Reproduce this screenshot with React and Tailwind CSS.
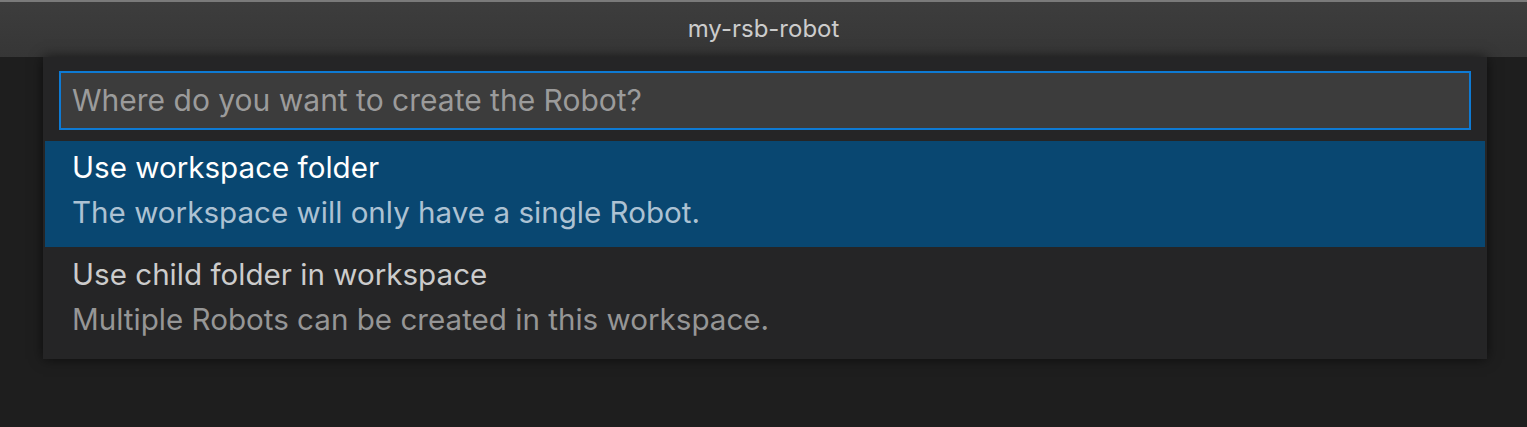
export default function App() {
  const font = { fontFamily: 'Inter, "Noto Sans", sans-serif' };
  return (
    <div className="w-[1527px] h-[427px] bg-[#1e1e1e] flex flex-col overflow-hidden" style={font}>
      {/* window title bar */}
      <div className="h-[57px] shrink-0 border-t-2 border-[#7a7a7a] bg-gradient-to-b from-[#3d3d3d] to-[#363636] flex items-center justify-center pb-[2px]">
        <span className="text-[24px] text-[#cccccc]">my-rsb-robot</span>
      </div>
      {/* quick pick */}
      <div className="ml-[43px] w-[1444px] h-[302px] bg-[#252526] shadow-[0_0_12px_rgba(0,0,0,0.6)] flex flex-col pt-[14px] px-[2px]">
        <div className="mx-[14px] h-[59px] border-2 border-[#0e7ad3] bg-[#3c3c3c] flex items-center px-[11px]">
          <span className="text-[30px] text-[#9b9b9b]">Where do you want to create the Robot?</span>
        </div>
        <div className="mt-[11px] h-[106px] bg-[#094771] flex flex-col pt-[4px] pl-[27px]">
          <div className="text-[29.6px] leading-[45px] text-white">Use workspace folder</div>
          <div className="text-[29.6px] leading-[45px] text-[#adc2d3]">The workspace will only have a single Robot.</div>
        </div>
        <div className="h-[106px] flex flex-col pt-[5px] pl-[27px]">
          <div className="text-[29.6px] leading-[45px] text-[#cccccc]">Use child folder in workspace</div>
          <div className="text-[29.6px] leading-[45px] text-[#969696]">Multiple Robots can be created in this workspace.</div>
        </div>
      </div>
    </div>
  );
}
